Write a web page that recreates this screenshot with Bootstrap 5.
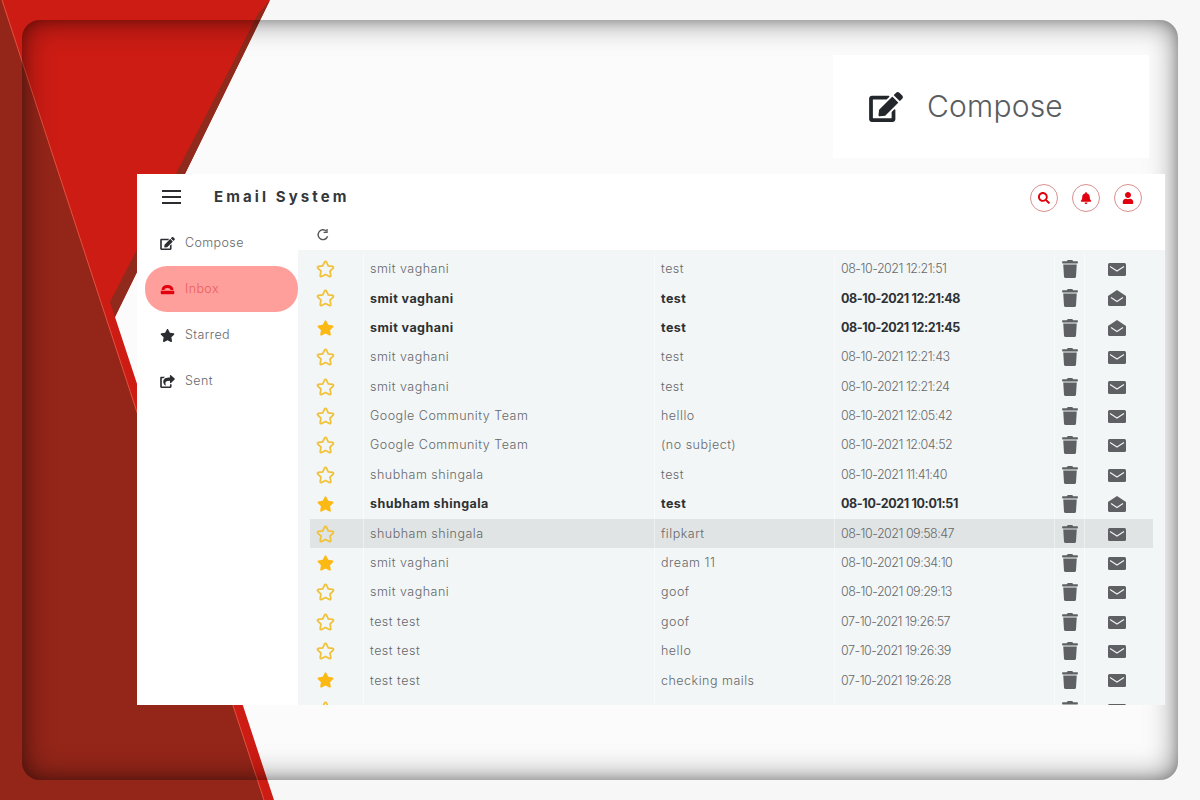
<!DOCTYPE html>
<html lang="en">
<head>
    <meta charset="UTF-8">
    <title>Email System</title>
    <link href="https://cdn.jsdelivr.net/npm/bootstrap@5.3.0/dist/css/bootstrap.min.css" rel="stylesheet">
    <style>
        html, body { height: 100%; }
        body {
            width: 1200px;
            height: 800px;
            overflow: hidden;
            position: relative;
            background: #f7f7f7;
            font-family: "Inter", "Liberation Sans", sans-serif;
            color: #6d6f71;
        }
        .backdrop { position: absolute; left: 0; top: 0; }
        /* the sunken frame around the whole picture */
        .frame-shade {
            position: absolute;
            left: 22px; top: 20px;
            width: 1156px; height: 760px;
            border-radius: 18px;
            box-shadow: inset 0 0 30px rgba(0,0,0,.5), inset 0 0 12px rgba(0,0,0,.22);
        }
        .stage { position: relative; padding: 55px 35px 0 137px; }

        .compose-callout {
            width: 316px; height: 103px;
            margin-left: auto;
            margin-right: 16px;
            margin-bottom: 16px;
            padding-left: 36px;
            gap: 24px;
            background: #fff;
            font-size: 30px;
            font-weight: 300;
            letter-spacing: .2px;
            color: #5a5d5f;
        }
        .compose-callout svg { width: 34px; height: 30px; fill: #23262a; }

        .app-window { height: 531px; background: #fff; overflow: hidden; }
        .app-head { height: 46px; padding: 0 23px 0 25px; }
        .burger { width: 19px; height: 14px; margin-right: 33px; border-top: 2px solid #2b2d30; border-bottom: 2px solid #2b2d30; position: relative; }
        .burger::after { content: ""; position: absolute; left: 0; right: 0; top: 4px; height: 2px; background: #2b2d30; }
        .app-title { font-size: 15px; font-weight: 700; letter-spacing: 3.1px; color: #35383a; }
        .head-btns { column-gap: 14px; margin-top: 2px; }
        .round-btn { width: 28px; height: 28px; border: 1px solid #dc8f8f; border-radius: 50%; }
        .round-btn svg { width: 12px; height: 12px; fill: #e0000e; }

        .side-menu { width: 161px; padding-left: 8px; }
        .side-item { height: 46px; padding-left: 15px; gap: 10px; font-size: 12.5px; font-weight: 300; letter-spacing: .4px; color: #66686a; border-radius: 22px; }
        .side-item svg { width: 15px; height: 13px; fill: #2b2d30; }
        .side-item.is-active { background: #ff9f9c; color: #e8605e; }
        .side-item.is-active svg { fill: #e3000f; }

        .mail-main { min-width: 0; }
        .mail-tools { height: 30px; padding-left: 18px; padding-bottom: 1px; }
        .mail-tools svg { width: 14px; height: 14px; fill: none; stroke: #55585a; stroke-width: 1.6; }
        .mail-panel { height: 455px; padding: 4.3px 12px 0; background: #f2f6f7; overflow: hidden; }
        .mail-row { height: 29.4px; font-size: 12.5px; font-weight: 300; letter-spacing: .5px; color: #66686a; }
        .mail-row.is-unread { font-weight: 700; color: #2e3133; letter-spacing: .45px; }
        .mail-row.is-hover { background: #e1e4e4; }
        .mail-row > div { height: 100%; display: flex; align-items: center; border-left: 1px solid rgba(255,255,255,.45); white-space: nowrap; }
        .c-star { width: 53px; padding-left: 6px; border-left: 0 !important; }
        .c-from, .c-subj, .c-date { padding-left: 6px; padding-top: 1px; }
        .c-from { width: 291px; }
        .c-subj { width: 180px; }
        .c-date { width: 220px; letter-spacing: -.5px; }
        .is-unread .c-date { letter-spacing: -.35px; }
        .c-bin { width: 30px; justify-content: center; }
        .c-env { width: 64px; justify-content: center; }
        .star-icon { width: 19px; height: 18px; fill: #fdb913; }
        .star-icon.is-empty { fill: none; stroke: #f0c23c; stroke-width: 60; }
        .bin-icon { width: 16px; height: 18px; fill: #5e6063; }
        .env-icon { width: 18px; height: 16px; }
    </style>
</head>
<body>
    <svg class="backdrop" width="1200" height="800" viewBox="0 0 1200 800">
        <rect x="22" y="20" width="1156" height="760" rx="18" fill="#fbfbfb"/>
        <polygon points="0,0 270,0 115,317 274,800 263,800 0,0" fill="#cc1c14"/>
        <polygon points="270,0 115,317 110,302 258,14" fill="#8f2a1c"/>
        <polygon points="0,0 2,0 264,800 0,800" fill="#942519"/>
        <line x1="2" y1="0" x2="264" y2="800" stroke="#e8503f" stroke-width="1"/>
    </svg>
    <div class="frame-shade"></div>

    <div class="stage">
        <div class="compose-callout d-flex align-items-center">
            <svg viewBox="0 0 576 512"><use href="#i-edit"/></svg>
            <span>Compose</span>
        </div>

        <div class="app-window">
            <div class="app-head d-flex align-items-center">
                <div class="burger"></div>
                <div class="app-title">Email System</div>
                <div class="head-btns ms-auto d-flex">
                    <div class="round-btn d-flex align-items-center justify-content-center"><svg viewBox="0 0 512 512"><use href="#i-search"/></svg></div>
                    <div class="round-btn d-flex align-items-center justify-content-center"><svg viewBox="0 0 448 512"><use href="#i-bell"/></svg></div>
                    <div class="round-btn d-flex align-items-center justify-content-center"><svg viewBox="0 0 448 512"><use href="#i-user"/></svg></div>
                </div>
            </div>

            <div class="d-flex">
                <div class="side-menu">
                    <div class="side-item d-flex align-items-center"><svg viewBox="0 0 576 512"><use href="#i-edit"/></svg>Compose</div>
                    <div class="side-item is-active d-flex align-items-center"><svg viewBox="0 0 20 14"><path d="M2 7.500C2.500 3 5 1 10 1s7.500 2 8 6.500h-4c-.5-1.500-1-2.500-4-2.500s-3.500 1-4 2.500zM1 8.500h18V12c0 .8-.5 1.300-1.300 1.300H2.300C1.500 13.300 1 12.800 1 12z"/></svg>Inbox</div>
                    <div class="side-item d-flex align-items-center"><svg viewBox="0 0 576 512"><use href="#i-star"/></svg>Starred</div>
                    <div class="side-item d-flex align-items-center"><svg viewBox="0 0 576 512"><use href="#i-share"/></svg>Sent</div>
                </div>
                <div class="mail-main flex-grow-1">
                    <div class="mail-tools d-flex align-items-center">
                        <svg viewBox="0 0 16 16"><path d="M13.300 9.500A5.600 5.600 0 1 1 11.900 3.600"/><path d="M12.600 1v4h-4" stroke-width="1.500"/></svg>
                    </div>
                    <div class="mail-panel" id="mailList"></div>
                </div>
            </div>
        </div>
    </div>

    <svg width="0" height="0" class="position-absolute">
        <defs>
            <path id="i-star" d="M259.300 17.800L194 150.200 47.900 171.500c-26.200 3.800-36.700 36.100-17.700 54.600l105.700 103-25 145.500c-4.500 26.300 23.200 46 46.400 33.700L288 439.600l130.700 68.700c23.200 12.200 50.900-7.400 46.400-33.700l-25-145.500 105.700-103c19-18.500 8.500-50.800-17.700-54.600L382 150.200 316.700 17.800c-11.700-23.600-45.600-23.900-57.400 0z"/>
            <path id="i-bin" d="M432 32H312l-9.400-18.700A24 24 0 0 0 281.100 0H166.800a23.720 23.720 0 0 0-21.400 13.300L136 32H16A16 16 0 0 0 0 48v32a16 16 0 0 0 16 16h416a16 16 0 0 0 16-16V48a16 16 0 0 0-16-16zM53.200 467a48 48 0 0 0 47.900 45h245.800a48 48 0 0 0 47.900-45L416 128H32z"/>
            <path id="i-search" d="M505 442.700L405.300 343c-4.500-4.500-10.600-7-17-7H372c27.600-35.300 44-79.700 44-128C416 93.100 322.900 0 208 0S0 93.100 0 208s93.100 208 208 208c48.300 0 92.700-16.400 128-44v16.300c0 6.400 2.500 12.500 7 17l99.700 99.700c9.400 9.400 24.600 9.400 33.900 0l28.300-28.300c9.400-9.400 9.400-24.600.1-34zM208 336c-70.700 0-128-57.200-128-128 0-70.700 57.200-128 128-128 70.700 0 128 57.200 128 128 0 70.700-57.200 128-128 128z"/>
            <path id="i-bell" d="M224 512c35.320 0 63.970-28.650 63.970-64H160.030c0 35.350 28.650 64 63.970 64zm215.390-149.710c-19.320-20.760-55.470-51.990-55.470-154.290 0-77.700-54.480-139.900-127.940-155.160V32c0-17.670-14.320-32-31.980-32s-31.980 14.330-31.980 32v20.840C118.560 68.100 64.080 130.300 64.080 208c0 102.300-36.150 133.530-55.470 154.290-6 6.450-8.660 14.160-8.610 21.710.11 16.400 12.980 32 32.100 32h383.800c19.120 0 32-15.600 32.100-32 .05-7.550-2.610-15.270-8.610-21.710z"/>
            <path id="i-user" d="M224 256c70.700 0 128-57.300 128-128S294.700 0 224 0 96 57.300 96 128s57.300 128 128 128zm89.600 32h-16.700c-22.200 10.200-46.900 16-72.900 16s-50.600-5.800-72.900-16h-16.700C60.200 288 0 348.200 0 422.400V464c0 26.500 21.500 48 48 48h352c26.500 0 48-21.500 48-48v-41.600c0-74.200-60.200-134.400-134.400-134.400z"/>
            <path id="i-edit" d="M402.600 83.200l90.200 90.200c3.800 3.800 3.800 10 0 13.800L274.400 405.600l-92.800 10.300c-12.400 1.400-22.900-9.100-21.500-21.500l10.300-92.800L388.800 83.200c3.800-3.800 10-3.800 13.800 0zm162-22.900l-48.800-48.800c-15.200-15.200-39.900-15.200-55.200 0l-35.400 35.400c-3.800 3.800-3.800 10 0 13.800l90.200 90.200c3.800 3.800 10 3.800 13.800 0l35.400-35.400c15.200-15.300 15.200-40 0-55.200zM384 346.200V448H64V128h229.800c3.200 0 6.200-1.300 8.500-3.500l40-40c7.600-7.600 2.200-20.500-8.500-20.500H48C21.500 64 0 85.500 0 112v352c0 26.500 21.500 48 48 48h352c26.500 0 48-21.500 48-48V306.200c0-10.700-12.900-16-20.500-8.500l-40 40c-2.200 2.300-3.500 5.300-3.500 8.500z"/>
            <path id="i-share" d="M568.482 177.448L424.479 313.433C409.300 327.768 384 317.140 384 295.985v-71.963c-144.575.970-205.566 35.113-164.775 171.353 4.483 14.973-12.846 26.567-25.006 17.330C155.252 383.105 120 326.488 120 269.339c0-143.937 117.599-172.500 264-173.312V24.012c0-21.174 25.317-31.768 40.479-17.448l144.003 135.988c10.020 9.463 10.028 25.425 0 34.896zM384 379.128V448H64V128h50.916a11.990 11.990 0 0 0 8.648-3.693c14.953-15.568 32.237-27.890 51.014-37.676C185.708 80.830 181.584 64 169.033 64H48C21.490 64 0 85.490 0 112v352c0 26.510 21.490 48 48 48h352c26.510 0 48-21.490 48-48v-88.806c0-8.288-8.197-14.060-16.011-11.299a71.923 71.923 0 0 1-34.189 3.377c-7.270-1.046-13.800 4.514-13.800 11.856z"/>
        </defs>
    </svg>

    <script>
        // from, subject, date, starred, unread
        const mails = [
            ['smit vaghani', 'test', '08-10-2021 12:21:51', 0, 0],
            ['smit vaghani', 'test', '08-10-2021 12:21:48', 0, 1],
            ['smit vaghani', 'test', '08-10-2021 12:21:45', 1, 1],
            ['smit vaghani', 'test', '08-10-2021 12:21:43', 0, 0],
            ['smit vaghani', 'test', '08-10-2021 12:21:24', 0, 0],
            ['Google Community Team', 'helllo', '08-10-2021 12:05:42', 0, 0],
            ['Google Community Team', '(no subject)', '08-10-2021 12:04:52', 0, 0],
            ['shubham shingala', 'test', '08-10-2021 11:41:40', 0, 0],
            ['shubham shingala', 'test', '08-10-2021 10:01:51', 1, 1],
            ['shubham shingala', 'filpkart', '08-10-2021 09:58:47', 0, 0],
            ['smit vaghani', 'dream 11', '08-10-2021 09:34:10', 1, 0],
            ['smit vaghani', 'goof', '08-10-2021 09:29:13', 0, 0],
            ['test test', 'goof', '07-10-2021 19:26:57', 0, 0],
            ['test test', 'hello', '07-10-2021 19:26:39', 0, 0],
            ['test test', 'checking mails', '07-10-2021 19:26:28', 1, 0],
            ['', '', '', 0, 0]
        ];
        const closedEnv = '<svg class="env-icon" viewBox="0 0 18 16"><rect y="2" width="18" height="13" rx="1.500" fill="#5e6063"/><path d="M2 5.500l7 4.500 7-4.500" fill="none" stroke="#eef2f3" stroke-width="1.200"/></svg>';
        const openEnv = '<svg class="env-icon" viewBox="0 0 18 16"><path d="M9 0l9 6v8.500c0 .8-.7 1.500-1.500 1.500h-15C.7 16 0 15.300 0 14.500V6z" fill="#5e6063"/><path d="M3 7.500l6 4 6-4" fill="none" stroke="#eef2f3" stroke-width="1.200"/></svg>';

        document.getElementById('mailList').innerHTML = mails.map((m, i) => `
            <div class="mail-row d-flex ${m[4] ? 'is-unread' : ''} ${i === 9 ? 'is-hover' : ''}">
                <div class="c-star"><svg class="star-icon ${m[3] ? '' : 'is-empty'}" viewBox="-30 -30 636 572"><use href="#i-star"/></svg></div>
                <div class="c-from">${m[0]}</div>
                <div class="c-subj">${m[1]}</div>
                <div class="c-date">${m[2]}</div>
                <div class="c-bin"><svg class="bin-icon" viewBox="0 0 448 512"><use href="#i-bin"/></svg></div>
                <div class="c-env">${m[4] ? openEnv : closedEnv}</div>
            </div>`).join('');
    </script>
    <script src="https://cdn.jsdelivr.net/npm/bootstrap@5.3.0/dist/js/bootstrap.bundle.min.js"></script>
</body>
</html>
